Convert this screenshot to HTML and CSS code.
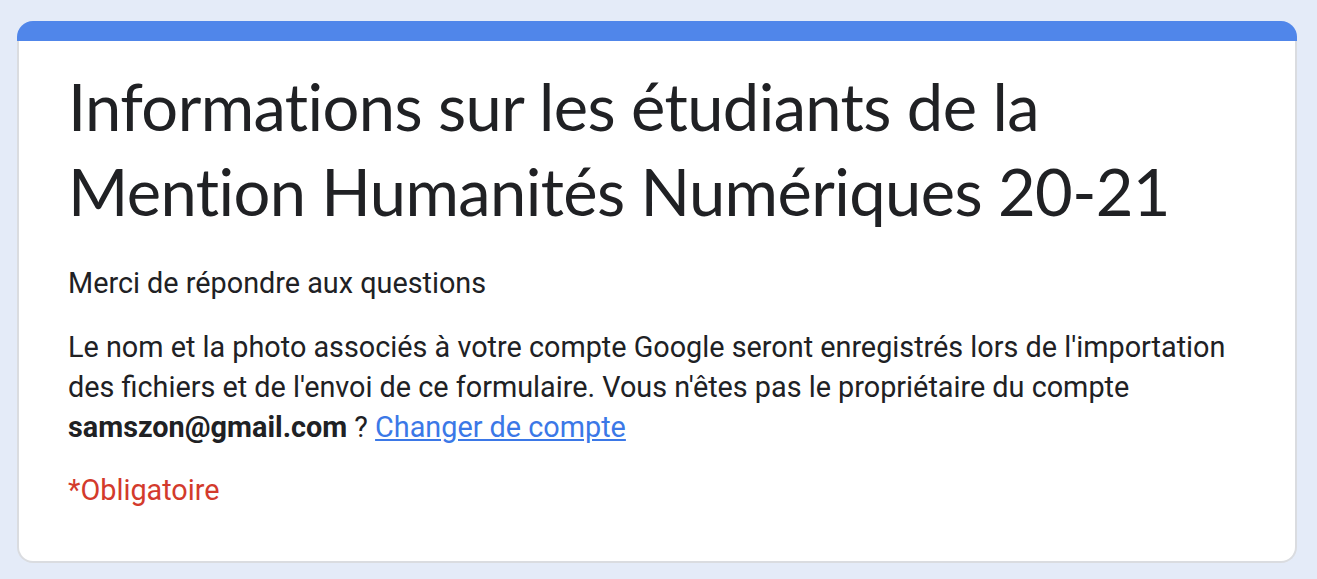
FILE: index.html
```html
<!DOCTYPE html>
<html lang="fr">
<head>
<meta charset="utf-8">
<title>Informations sur les étudiants</title>
<link rel="stylesheet" href="styles.css">
</head>
<body>
<main class="page">
  <section class="card">
    <div class="card-accent"></div>
    <div class="card-body">
      <h1 class="form-title">Informations sur les étudiants de la Mention Humanités Numériques 20-21</h1>
      <p class="form-desc">Merci de répondre aux questions</p>
      <p class="account-note">Le nom et la photo associés à votre compte Google seront enregistrés lors de l'importation des fichiers et de l'envoi de ce formulaire. Vous n'êtes pas le propriétaire du compte <strong>samszon@gmail.com</strong> ? <a class="switch-link" href="#">Changer de compte</a></p>
      <p class="required-note">*Obligatoire</p>
    </div>
  </section>
</main>
</body>
</html>
```

FILE: styles.css
```css
html, body {
  margin: 0;
  padding: 0;
  background: #e4ebf8;
}
body {
  font-family: Roboto, "Liberation Sans", sans-serif;
  color: #202124;
}
.page {
  padding: 21px 20px 0 17px;
}
.card {
  display: flex;
  flex-direction: column;
  width: 1280px;
}
.card-accent {
  height: 20px;
  background: #5086ea;
  border-radius: 16px 16px 0 0;
}
.card-body {
  background: #ffffff;
  border: 2px solid #dadce0;
  border-top: none;
  border-radius: 0 0 16px 16px;
  padding: 23px 62px 51px 49px;
}
.form-title {
  margin: 0;
  font-family: Lato, "Open Sans", sans-serif;
  font-weight: 400;
  font-size: 65px;
  line-height: 85px;
  letter-spacing: -0.6px;
  font-variant-ligatures: none;
  color: #202124;
}
.form-desc {
  margin: 29px 0 0;
  font-size: 28.8px;
  line-height: 40px;
}
.account-note {
  margin: 24px 0 0;
  font-size: 28.8px;
  line-height: 40px;
}
.account-note strong {
  font-weight: 700;
}
.switch-link {
  color: #3b78e7;
  text-decoration: underline;
}
.required-note {
  margin: 23px 0 0;
  font-size: 28.8px;
  line-height: 40px;
  color: #d33a2c;
}
```
